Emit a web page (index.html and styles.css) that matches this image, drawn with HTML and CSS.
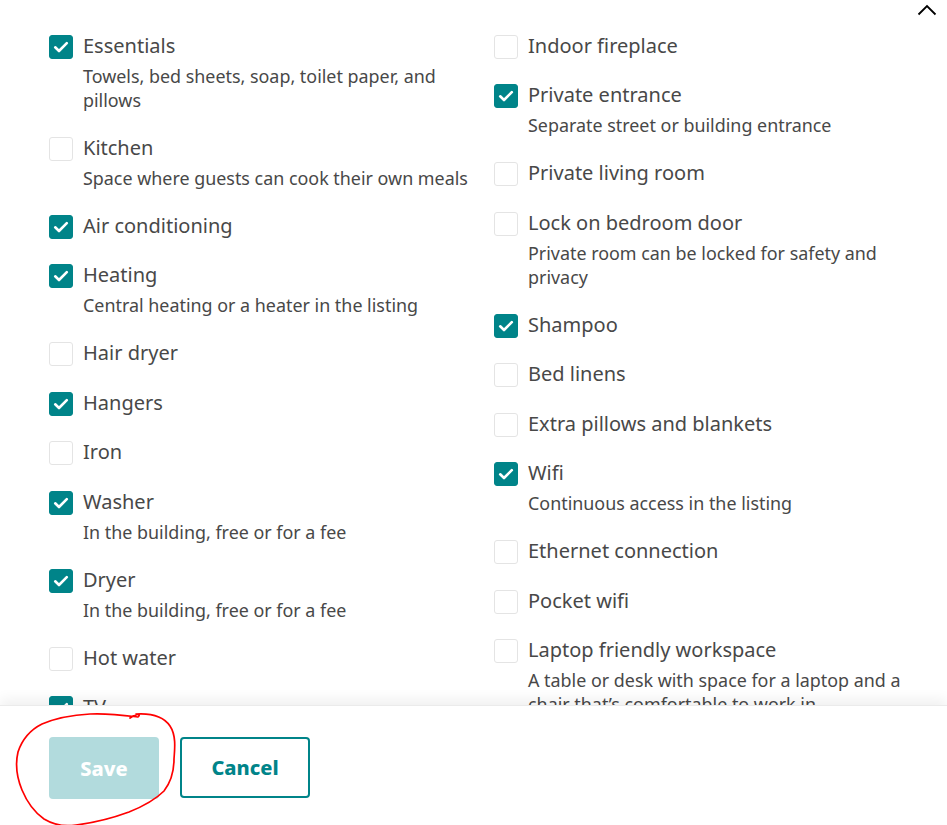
FILE: index.html
```html
<!DOCTYPE html>
<html>
<head>
<meta charset="utf-8">
<link rel="stylesheet" href="styles.css">
</head>
<body>
<div class="page">
  <button class="collapse" aria-label="Collapse">
    <svg width="20" height="12" viewBox="0 0 20 12"><path d="M1.5 10.5 L10 2 L18.5 10.5" fill="none" stroke="#000" stroke-width="1.8"/></svg>
  </button>
  <div class="scroll">
    <div class="col col-left">
      <div class="item"><span class="box on"></span><div class="txt"><div class="label">Essentials</div><div class="desc">Towels, bed sheets, soap, toilet paper, and pillows</div></div></div>
      <div class="item"><span class="box"></span><div class="txt"><div class="label">Kitchen</div><div class="desc">Space where guests can cook their own meals</div></div></div>
      <div class="item"><span class="box on"></span><div class="txt"><div class="label">Air conditioning</div></div></div>
      <div class="item"><span class="box on"></span><div class="txt"><div class="label">Heating</div><div class="desc">Central heating or a heater in the listing</div></div></div>
      <div class="item"><span class="box"></span><div class="txt"><div class="label">Hair dryer</div></div></div>
      <div class="item"><span class="box on"></span><div class="txt"><div class="label">Hangers</div></div></div>
      <div class="item"><span class="box"></span><div class="txt"><div class="label">Iron</div></div></div>
      <div class="item"><span class="box on"></span><div class="txt"><div class="label">Washer</div><div class="desc">In the building, free or for a fee</div></div></div>
      <div class="item"><span class="box on"></span><div class="txt"><div class="label">Dryer</div><div class="desc">In the building, free or for a fee</div></div></div>
      <div class="item"><span class="box"></span><div class="txt"><div class="label">Hot water</div></div></div>
      <div class="item"><span class="box on"></span><div class="txt"><div class="label">TV</div></div></div>
    </div>
    <div class="col col-right">
      <div class="item"><span class="box"></span><div class="txt"><div class="label">Indoor fireplace</div></div></div>
      <div class="item"><span class="box on"></span><div class="txt"><div class="label">Private entrance</div><div class="desc">Separate street or building entrance</div></div></div>
      <div class="item"><span class="box"></span><div class="txt"><div class="label">Private living room</div></div></div>
      <div class="item"><span class="box"></span><div class="txt"><div class="label">Lock on bedroom door</div><div class="desc">Private room can be locked for safety and privacy</div></div></div>
      <div class="item"><span class="box on"></span><div class="txt"><div class="label">Shampoo</div></div></div>
      <div class="item"><span class="box"></span><div class="txt"><div class="label">Bed linens</div></div></div>
      <div class="item"><span class="box"></span><div class="txt"><div class="label">Extra pillows and blankets</div></div></div>
      <div class="item"><span class="box on"></span><div class="txt"><div class="label">Wifi</div><div class="desc">Continuous access in the listing</div></div></div>
      <div class="item"><span class="box"></span><div class="txt"><div class="label">Ethernet connection</div></div></div>
      <div class="item"><span class="box"></span><div class="txt"><div class="label">Pocket wifi</div></div></div>
      <div class="item"><span class="box"></span><div class="txt"><div class="label">Laptop friendly workspace</div><div class="desc">A table or desk with space for a laptop and a chair that’s comfortable to work in</div></div></div>
    </div>
  </div>
  <div class="footer">
    <button class="btn btn-save">Save</button>
    <button class="btn btn-cancel">Cancel</button>
    <svg class="scribble" width="170" height="122" viewBox="0 0 170 122">
      <path d="M116 9 C122 5 128 4 124 8 C108 6 93 4 76 5 C58 6 42 9 28 15 C16 21 8 31 4 43 C1 56 3 69 8 81 C13 93 20 103 30 110 C40 116 50 118 62 116 C78 114 96 110 115 103 C130 97 142 90 150 82 C157 73 160 62 160 50 C161 38 162 26 156 17 C150 8 138 4 122 5" fill="none" stroke="#ff0000" stroke-width="1.7" stroke-linecap="round" stroke-linejoin="round"/>
    </svg>
  </div>
</div>
</body>
</html>
```

FILE: styles.css
```css
html, body {
  margin: 0;
  padding: 0;
  background: #fff;
}

.page {
  position: relative;
  width: 947px;
  height: 825px;
  display: flex;
  flex-direction: column;
  overflow: hidden;
  font-family: "Noto Sans", "Open Sans", sans-serif;
  color: #484848;
}

.collapse {
  position: absolute;
  top: 2px;
  right: 8px;
  border: 0;
  background: none;
  padding: 0;
  width: 24px;
  height: 16px;
  display: flex;
  align-items: center;
  justify-content: center;
}

.scroll {
  height: 705px;
  flex: none;
  overflow: hidden;
  display: flex;
  padding: 32.5px 0 0 49px;
  box-sizing: border-box;
}

.col {
  display: flex;
  flex-direction: column;
  gap: 23px;
}

.col-left {
  width: 445px;
}

.col-right {
  width: 420px;
}

.item {
  display: flex;
  gap: 10px;
}

.txt {
  max-width: 400px;
}

.box {
  flex: none;
  width: 24px;
  height: 24px;
  margin-top: 2px;
  box-sizing: border-box;
  border: 1px solid #e4e4e4;
  border-radius: 3px;
  background: #fff;
}

.box.on {
  border-color: #008489;
  background: #008489 url("data:image/svg+xml,%3Csvg xmlns='http://www.w3.org/2000/svg' width='24' height='24' viewBox='0 0 24 24'%3E%3Cpath d='M6.2 12.3 L10 16 L17.8 8.2' fill='none' stroke='%23fff' stroke-width='2.6' stroke-linecap='round' stroke-linejoin='round'/%3E%3C/svg%3E") center / 24px 24px no-repeat;
}

.label {
  font-size: 20px;
  line-height: 26.5px;
}

.desc {
  margin-top: 4.5px;
  font-size: 17.9px;
  line-height: 24px;
}

.footer {
  position: relative;
  flex: 1;
  display: flex;
  align-items: flex-start;
  gap: 21px;
  padding: 31px 0 0 49px;
  border-top: 1px solid #ebebeb;
  box-shadow: 0 -6px 12px rgba(0, 0, 0, 0.06);
  background: #fff;
}

.btn {
  font-family: "Noto Sans", "Open Sans", sans-serif;
  font-weight: 800;
  font-size: 20px;
  border-radius: 4px;
  height: 62px;
  box-sizing: border-box;
  cursor: pointer;
}

.btn-save {
  width: 110px;
  background: #b2dbdd;
  color: #fff;
  border: 0;
}

.btn-cancel {
  width: 130px;
  height: 61px;
  background: #fff;
  color: #008489;
  border: 2px solid #008489;
}

.scribble {
  position: absolute;
  left: 14px;
  top: 3px;
  pointer-events: none;
}
```
